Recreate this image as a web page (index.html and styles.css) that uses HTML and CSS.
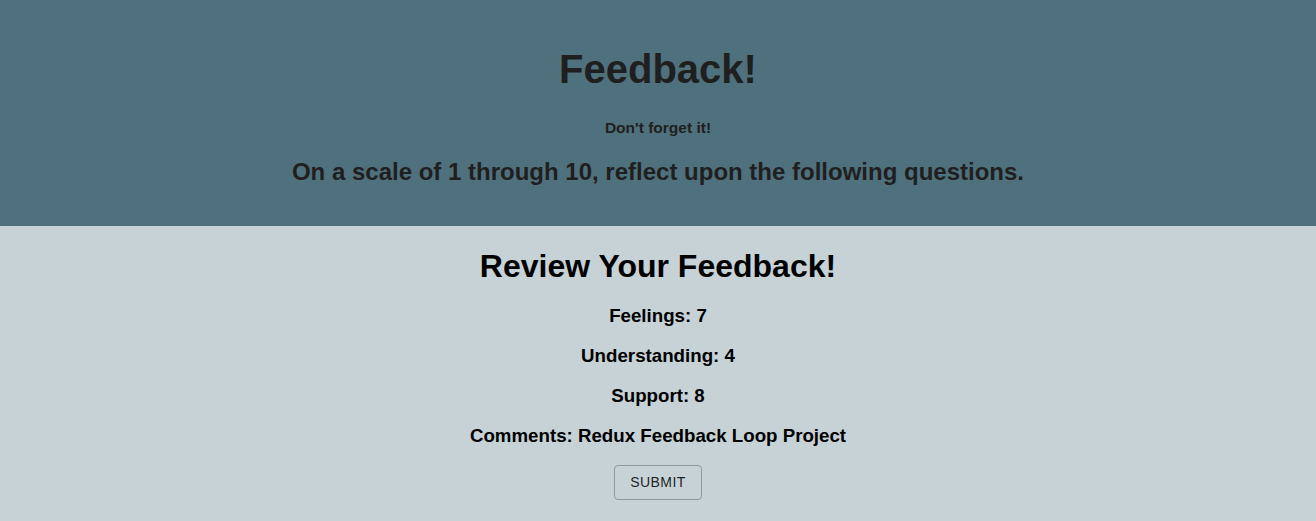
FILE: index.html
```html
<!DOCTYPE html>
<html lang="en">
<head>
<meta charset="utf-8">
<title>Feedback!</title>
<link rel="stylesheet" href="styles.css">
</head>
<body>
<div class="app">
  <header class="app-header">
    <h1 class="app-title">Feedback!</h1>
    <h4 class="app-subtitle">Don't forget it!</h4>
    <h2 class="app-intro">On a scale of 1 through 10, reflect upon the following questions.</h2>
  </header>
  <main class="review">
    <h1 class="review-title">Review Your Feedback!</h1>
    <h3 class="review-item">Feelings: 7</h3>
    <h3 class="review-item">Understanding: 4</h3>
    <h3 class="review-item">Support: 8</h3>
    <h3 class="review-item">Comments: Redux Feedback Loop Project</h3>
    <button class="submit-btn" type="button">Submit</button>
  </main>
</div>
</body>
</html>
```
FILE: styles.css
```css
html, body {
  margin: 0;
  padding: 0;
}
body {
  font-family: "Liberation Sans", Arial, Helvetica, sans-serif;
  background: #c6d2d6;
  color: #000;
}
.app {
  text-align: center;
}
.app-header {
  background: #4f707d;
  color: #1f1f1f;
  padding: 46px 0 40px;
}
.app-title {
  font-size: 40px;
  font-weight: bold;
  margin: 0;
  line-height: 46px;
}
.app-subtitle {
  font-size: 15.5px;
  font-weight: bold;
  margin: 27px 0 0;
  line-height: 18px;
}
.app-intro {
  font-size: 24px;
  font-weight: bold;
  margin: 21px 0 0;
  line-height: 28px;
}
.review {
  display: flex;
  flex-direction: column;
  align-items: center;
  padding: 22px 0 20px;
}
.review-title {
  font-size: 32px;
  margin: 0 0 20px;
  line-height: 37px;
}
.review-item {
  font-size: 18.72px;
  margin: 0 0 18.5px;
  line-height: 21.5px;
}
.submit-btn {
  font-family: "Liberation Sans", Arial, Helvetica, sans-serif;
  font-size: 14px;
  font-weight: 500;
  letter-spacing: 0.4px;
  text-transform: uppercase;
  color: rgba(0, 0, 0, 0.87);
  background: transparent;
  border: 1px solid #8d999d;
  border-radius: 4px;
  padding: 5px 15px;
  line-height: 23px;
  margin-top: 0;
  cursor: pointer;
}
```
